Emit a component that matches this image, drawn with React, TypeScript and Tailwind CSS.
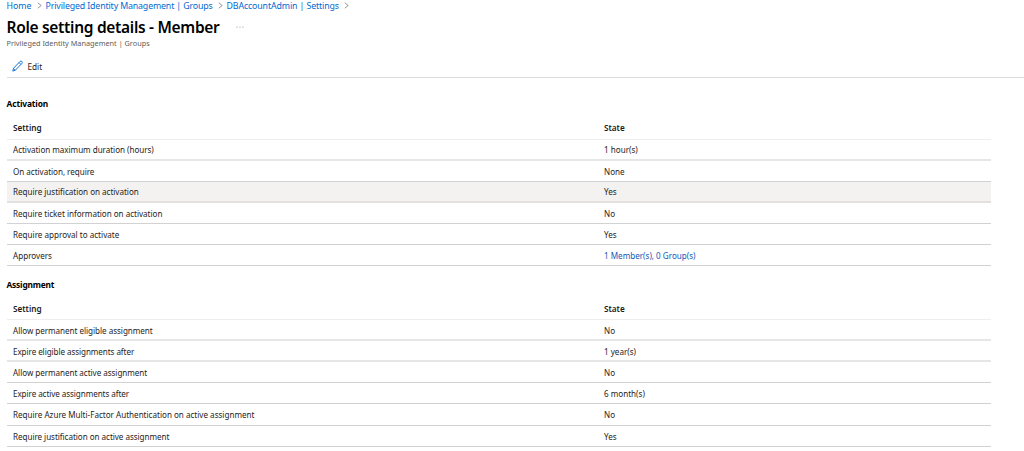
import React from 'react';

interface Setting {
  name: string;
  state: string;
  nameClass?: string;
  stateClass?: string;
  rowClass?: string;
}

interface SettingsTableProps {
  title: string;
  titleClass: string;
  settings: Setting[];
}

const softLine = 'border-b-2 border-[#e6e6e6]';
const line = 'border-b border-[#d2d2d2]';

const activation: Setting[] = [
  { name: 'Activation maximum duration (hours)', state: '1 hour(s)', nameClass: 'tracking-[-0.04px]', rowClass: softLine },
  { name: 'On activation, require', state: 'None', nameClass: 'tracking-[-0.04px]', rowClass: line },
  { name: 'Require justification on activation', state: 'Yes', nameClass: 'tracking-[-0.03px]', rowClass: 'bg-[#f3f2f1] border-b-2 border-[#e2e1e0]' },
  { name: 'Require ticket information on activation', state: 'No', nameClass: 'tracking-[-0.03px]', rowClass: line },
  { name: 'Require approval to activate', state: 'Yes', rowClass: line },
  { name: 'Approvers', state: '1 Member(s), 0 Group(s)', stateClass: 'text-[#1258b8]', rowClass: line },
];

const assignment: Setting[] = [
  { name: 'Allow permanent eligible assignment', state: 'No', nameClass: 'tracking-[-0.04px]', rowClass: softLine },
  { name: 'Expire eligible assignments after', state: '1 year(s)', nameClass: 'tracking-[-0.08px]', rowClass: softLine },
  { name: 'Allow permanent active assignment', state: 'No', nameClass: 'tracking-[-0.05px]', rowClass: line },
  { name: 'Expire active assignments after', state: '6 month(s)', nameClass: 'tracking-[-0.08px]', rowClass: line },
  { name: 'Require Azure Multi-Factor Authentication on active assignment', state: 'No', nameClass: 'tracking-[-0.01px]', rowClass: line },
  { name: 'Require justification on active assignment', state: 'Yes', nameClass: 'tracking-[-0.05px]', rowClass: line },
];

const Chevron: React.FC = () => (
  <svg width="5" height="7" viewBox="0 0 5 7" fill="none" stroke="#8a8a8a" strokeWidth="0.9" className="shrink-0">
    <path d="M0.8 0.8 4.2 3.5 0.8 6.2" />
  </svg>
);

const SettingsTable: React.FC<SettingsTableProps> = ({ title, titleClass, settings }) => (
  <section className="ml-[6.5px] w-[984.5px]">
    <h2 className={`h-4 text-[8.4px] leading-4 font-bold text-black ${titleClass}`}>{title}</h2>
    <div className="mt-2 flex h-[19.5px] items-center border-b border-[#eeeeee] pb-[2px] pl-[6.5px] text-[8.2px] font-semibold text-[#1b1a19]">
      <span className="w-[591px]">Setting</span>
      <span>State</span>
    </div>
    {settings.map((s) => (
      <div key={s.name} className={`flex h-[21.1px] items-center pt-[2px] pl-[6.5px] text-[8.1px] text-[#1f1e1d] ${s.rowClass}`}>
        <span className={`w-[591px] ${s.nameClass ?? ''}`}>{s.name}</span>
        <span className={s.stateClass}>{s.state}</span>
      </div>
    ))}
  </section>
);

export default function App() {
  return (
    <div className="h-[451px] w-[1024px] overflow-hidden bg-white font-['Noto_Sans',sans-serif] whitespace-nowrap">
      {/* Breadcrumb */}
      <nav className="flex h-[11px] items-center pl-[6.5px] text-[8.8px] leading-[11px] text-[#0369d0]">
        <a className="w-[30px] pt-px">Home</a>
        <Chevron />
        <a className="ml-1 w-[172px] pt-px tracking-[-0.14px]">Privileged Identity Management | Groups</a>
        <Chevron />
        <a className="ml-1 w-[117px] pt-px tracking-[-0.12px]">DBAccountAdmin | Settings</a>
        <Chevron />
      </nav>

      {/* Page title */}
      <header className="pl-[6.5px]">
        <div className="mt-[5px] flex h-[22px] items-center">
          <h1 className="w-[229px] text-[15.5px] leading-[22px] font-semibold tracking-[-0.3px] text-black">Role setting details - Member</h1>
          <svg width="8" height="2" viewBox="0 0 8 2" fill="#8a8a8a">
            <circle cx="1" cy="1" r="0.6" />
            <circle cx="4" cy="1" r="0.6" />
            <circle cx="7" cy="1" r="0.6" />
          </svg>
        </div>
        <p className="h-[11px] text-[7.3px] leading-[11px] text-[#605e5c]">Privileged Identity Management | Groups</p>
      </header>

      {/* Command bar */}
      <div className="ml-[6.5px] flex h-[29px] items-center border-b border-[#dddddd] pt-[6px] pl-[5px] text-[8.2px] text-[#1f1e1d]">
        <svg width="11" height="12" viewBox="0 0 11 12" fill="none" stroke="#1976d2" strokeWidth="1" strokeLinejoin="round">
          <path d="M0.8 11.1 1.5 8.3 8 1.5Q8.9 0.6 9.9 1.5 10.7 2.5 9.9 3.4L3.4 10.2ZM7 2.5 8.9 4.4M1.5 8.3 3.4 10.2" />
        </svg>
        <span className="mt-[2px] ml-[5px]">Edit</span>
      </div>

      <div className="pt-[18px]">
        <SettingsTable title="Activation" titleClass="tracking-[-0.12px]" settings={activation} />
      </div>
      <div className="pt-[10.5px]">
        <SettingsTable title="Assignment" titleClass="tracking-[-0.2px]" settings={assignment} />
      </div>
    </div>
  );
}
